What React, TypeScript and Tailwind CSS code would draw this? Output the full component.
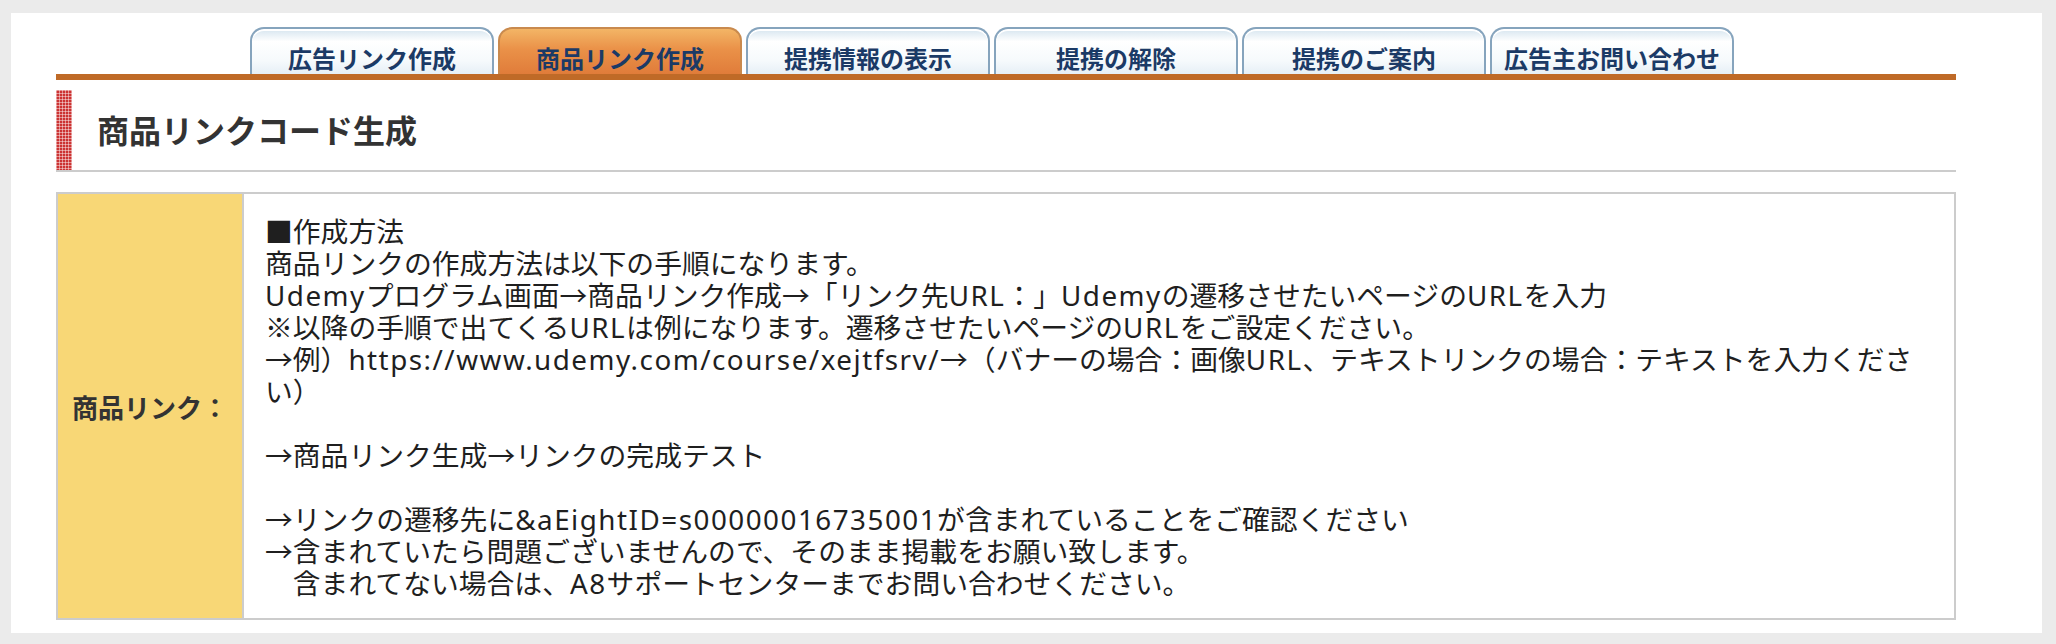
import React from 'react';

const tabs = [
  { label: '広告リンク作成', active: false },
  { label: '商品リンク作成', active: true },
  { label: '提携情報の表示', active: false },
  { label: '提携の解除', active: false },
  { label: '提携のご案内', active: false },
  { label: '広告主お問い合わせ', active: false },
];

const lines = [
  '■作成方法',
  '商品リンクの作成方法は以下の手順になります。',
  'Udemyプログラム画面→商品リンク作成→「リンク先URL：」Udemyの遷移させたいページのURLを入力',
  '※以降の手順で出てくるURLは例になります。遷移させたいページのURLをご設定ください。',
  '→例）https://www.udemy.com/course/xejtfsrv/→（バナーの場合：画像URL、テキストリンクの場合：テキストを入力くださ',
  'い）',
  '',
  '→商品リンク生成→リンクの完成テスト',
  '',
  '→リンクの遷移先に&aEightID=s00000016735001が含まれていることをご確認ください',
  '→含まれていたら問題ございませんので、そのまま掲載をお願い致します。',
  '　含まれてない場合は、A8サポートセンターまでお問い合わせください。',
];

// latin runs get a wider latin face, like the original page
function renderLine(line: string) {
  return line.split(/([\x21-\x7e]+)/).map((part, i) =>
    /^[\x21-\x7e]+$/.test(part) ? (
      <span key={i} className="font-['Noto_Sans',sans-serif] tracking-[1.5px]">
        {part}
      </span>
    ) : (
      <React.Fragment key={i}>{part}</React.Fragment>
    )
  );
}

export default function App() {
  return (
    <div className="min-h-screen bg-[#ebebeb] pt-[13px] pl-[11px] pr-[14px] pb-[11px] font-['Noto_Sans_CJK_JP',sans-serif]">
      <div className="bg-white pl-[45px] pr-[86px] pt-[14px] pb-[13px]">
        {/* tabs */}
        <nav className="flex gap-[4px] pl-[194px] h-[47px]">
          {tabs.map((tab) => (
            <div
              key={tab.label}
              className={`w-[244px] h-[47px] rounded-t-[14px] border-2 border-b-0 flex items-center justify-center pt-[12px] text-[24px] leading-none font-bold text-[#1b3a66] ${
                tab.active
                  ? 'border-[#c98a4e] bg-[linear-gradient(#f3b566,#ea9148_45%,#e07c3a)]'
                  : 'border-[#86a4bd] bg-[linear-gradient(#d6e5ef,#ffffff_28%,#f6fafc_70%,#e6eff6)] shadow-[inset_0_2px_0_#ffffff]'
              }`}
            >
              {tab.label}
            </div>
          ))}
        </nav>
        <div className="h-[6px] bg-[#bf6a27]" />

        {/* heading */}
        <div className="mt-[10px] flex items-center h-[82px] border-b-2 border-[#cccccc]">
          <div className="w-[16px] h-[80px] self-start bg-[#cc3333] [background-image:linear-gradient(90deg,rgba(255,255,255,.45)_1px,transparent_1px),linear-gradient(rgba(255,255,255,.45)_1px,transparent_1px)] [background-size:3px_3px]" />
          <h1 className="pl-[25px] text-[32px] leading-none font-bold text-[#333333] pb-[2px]">
            商品リンクコード生成
          </h1>
        </div>

        {/* table */}
        <div className="mt-[20px] flex h-[428px] border-2 border-[#cccccc]">
          <div className="w-[186px] shrink-0 bg-[#f8d776] border-r-2 border-[#cccccc] flex items-center justify-center text-[26px] font-bold text-[#333333]">
            商品リンク：
          </div>
          <div className="flex-1 pl-[21px] pt-[20px] text-[27.8px] leading-[32px] text-[#1f1f1f]">
            {lines.map((line, i) => (
              <div key={i} className="h-[32px] whitespace-pre">
                {renderLine(line)}
              </div>
            ))}
          </div>
        </div>
      </div>
    </div>
  );
}
